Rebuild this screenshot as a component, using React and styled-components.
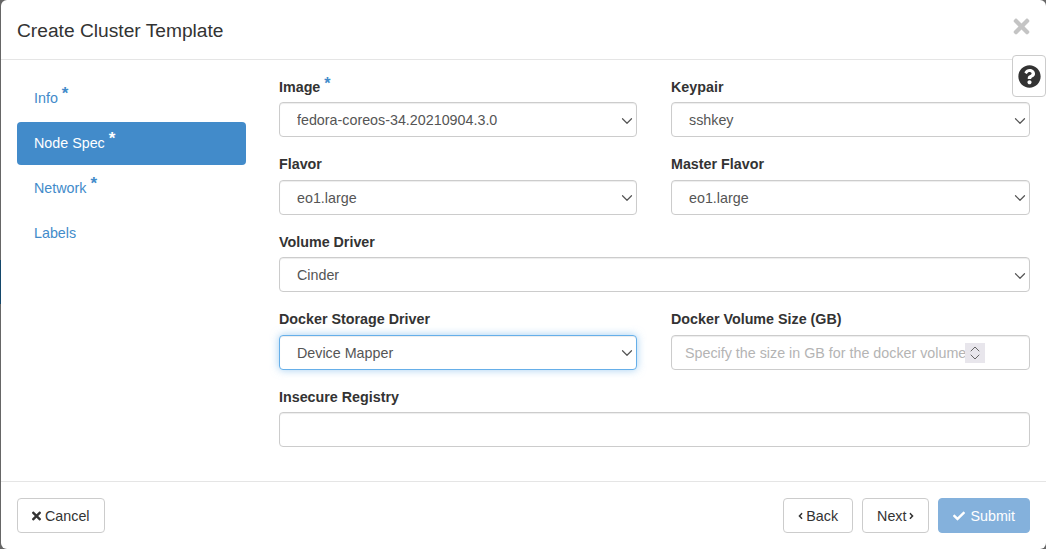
import styled, { createGlobalStyle } from 'styled-components';
import { ChevronDown, ChevronUp } from 'lucide-react';
import { FaAngleLeft, FaAngleRight, FaCheck, FaQuestionCircle, FaTimes } from 'react-icons/fa';

const GlobalStyle = createGlobalStyle`
  html, body {
    margin: 0;
    height: 100%;
    overflow: hidden;
  }
  body {
    background: linear-gradient(
      #666 0 260px,
      #14486b 260px 304px,
      #666 304px
    );
    font-family: "Liberation Sans", Arial, sans-serif;
    font-size: 14.3px;
    color: #333;
  }
`;

const steps = [
  { name: 'Info', required: true },
  { name: 'Node Spec', required: true, active: true },
  { name: 'Network', required: true },
  { name: 'Labels' },
];

const App = () => (
  <>
    <GlobalStyle />
    <Modal>
      <Header>
        <Title>Create Cluster Template</Title>
        <CloseIcon>
          <FaTimes />
        </CloseIcon>
      </Header>
      <HelpButton>
        <FaQuestionCircle />
      </HelpButton>
      <Body>
        <Nav>
          {steps.map((step) => (
            <NavItem key={step.name} $active={step.active}>
              {step.name}
              {step.required && <Star>*</Star>}
            </NavItem>
          ))}
        </Nav>
        <Form>
          <Field>
            <Label>
              Image<LabelStar>*</LabelStar>
            </Label>
            <SelectBox value="fedora-coreos-34.20210904.3.0" />
          </Field>
          <Field>
            <Label>Keypair</Label>
            <SelectBox value="sshkey" />
          </Field>
          <Field>
            <Label>Flavor</Label>
            <SelectBox value="eo1.large" />
          </Field>
          <Field>
            <Label>Master Flavor</Label>
            <SelectBox value="eo1.large" />
          </Field>
          <Field $wide>
            <Label>Volume Driver</Label>
            <SelectBox value="Cinder" />
          </Field>
          <Field>
            <Label>Docker Storage Driver</Label>
            <SelectBox value="Device Mapper" focused />
          </Field>
          <Field>
            <Label>Docker Volume Size (GB)</Label>
            <InputWrap>
              <Input placeholder="Specify the size in GB for the docker volume" />
              <Spinner>
                <ChevronUp size={16} strokeWidth={1.5} />
                <ChevronDown size={16} strokeWidth={1.5} />
              </Spinner>
            </InputWrap>
          </Field>
          <Field $wide>
            <Label>Insecure Registry</Label>
            <Input />
          </Field>
        </Form>
      </Body>
      <Footer>
        <Button>
          <CancelIcon /> Cancel
        </Button>
        <FooterRight>
          <Button>
            <AngleLeft /> Back
          </Button>
          <Button>
            Next <AngleRight />
          </Button>
          <SubmitButton>
            <FaCheck size={12} /> Submit
          </SubmitButton>
        </FooterRight>
      </Footer>
    </Modal>
  </>
);

const SelectBox = ({ value, focused }) => (
  <SelectWrap>
    <Select $focused={focused} defaultValue={value}>
      <option>{value}</option>
    </Select>
    <SelectArrow>
      <ChevronDown size={18} strokeWidth={1.6} />
    </SelectArrow>
  </SelectWrap>
);

export default App;

const Modal = styled.div`
  position: relative;
  box-sizing: border-box;
  width: 1045px;
  height: 549px;
  margin-left: 1px;
  background: #fff;
  border-radius: 6px;
  display: flex;
  flex-direction: column;
`;

const Header = styled.div`
  height: 60px;
  box-sizing: border-box;
  border-bottom: 1px solid #e5e5e5;
  padding: 0 16px;
  display: flex;
  align-items: center;
  justify-content: space-between;
`;

const Title = styled.h4`
  margin: 2px 0 0;
  font-size: 19.2px;
  font-weight: 400;
  color: #333;
`;

const CloseIcon = styled.span`
  display: flex;
  margin: 0 -3px 6px 0;
  font-size: 23px;
  color: #c4c4c4;
`;

const HelpButton = styled.div`
  position: absolute;
  top: 55px;
  right: 0;
  width: 34px;
  height: 42px;
  box-sizing: border-box;
  background: #fff;
  border: 1px solid #ccc;
  border-radius: 4px;
  display: flex;
  align-items: center;
  justify-content: center;
  font-size: 23px;
  color: #333;
`;

const Body = styled.div`
  flex: 1;
  display: flex;
  padding: 17px 16px 0;
`;

const Nav = styled.div`
  width: 229px;
  display: flex;
  flex-direction: column;
  gap: 2px;
`;

const NavItem = styled.div`
  height: 43px;
  box-sizing: border-box;
  padding: 0 17px 2px;
  display: flex;
  align-items: center;
  border-radius: 4px;
  color: ${(props) => (props.$active ? '#fff' : '#428bca')};
  background: ${(props) => (props.$active ? '#428bca' : 'transparent')};
`;

const Star = styled.span`
  align-self: flex-start;
  margin: 8px 0 0 4px;
  font-size: 17px;
  font-weight: 700;
  line-height: 1;
`;

const Form = styled.div`
  flex: 1;
  margin-left: 33px;
  display: grid;
  grid-template-columns: 358px 359px;
  column-gap: 34px;
  row-gap: 17.5px;
  align-content: start;
`;

const Field = styled.div`
  grid-column: ${(props) => (props.$wide ? '1 / -1' : 'auto')};
  display: flex;
  flex-direction: column;
`;

const Label = styled.label`
  height: 20px;
  margin: -0.25px 0 5.25px;
  font-weight: 700;
  line-height: 20px;
  color: #333;
`;

const LabelStar = styled.span`
  margin-left: 4px;
  font-size: 16px;
  color: #428bca;
  vertical-align: 3px;
  line-height: 0;
`;

const SelectWrap = styled.div`
  position: relative;
  height: 35px;
`;

const Select = styled.select`
  width: 100%;
  height: 100%;
  box-sizing: border-box;
  appearance: none;
  padding: 1px 30px 0 17px;
  font: inherit;
  color: #555;
  background: #fff;
  border: 1px solid ${(props) => (props.$focused ? '#66afe9' : '#ccc')};
  border-radius: 4px;
  outline: none;
  box-shadow: ${(props) =>
    props.$focused
      ? 'inset 0 1px 1px rgba(0,0,0,.075), 0 0 8px rgba(102,175,233,.6)'
      : 'inset 0 1px 1px rgba(0,0,0,.075)'};
`;

const SelectArrow = styled.span`
  position: absolute;
  top: 9.5px;
  right: 1px;
  display: flex;
  color: #555;
  pointer-events: none;
`;

const InputWrap = styled.div`
  position: relative;
`;

const Input = styled.input`
  width: 100%;
  height: 35px;
  box-sizing: border-box;
  padding: 1px 13px 0;
  font: inherit;
  color: #555;
  background: #fff;
  border: 1px solid #ccc;
  border-radius: 4px;
  outline: none;
  box-shadow: inset 0 1px 1px rgba(0, 0, 0, 0.075);

  &::placeholder {
    color: #b4b4b4;
    opacity: 1;
  }
`;

const Spinner = styled.span`
  position: absolute;
  top: 8px;
  right: 45px;
  width: 20px;
  height: 20px;
  background: #e8e6ec;
  color: #666;
  display: flex;
  flex-direction: column;
  align-items: center;
  justify-content: center;

  svg {
    margin: -4px 0;
  }
`;

const Footer = styled.div`
  height: 68px;
  box-sizing: border-box;
  border-top: 1px solid #e5e5e5;
  padding: 16px 16px 0;
  display: flex;
  justify-content: space-between;
  align-items: flex-start;
`;

const FooterRight = styled.div`
  display: flex;
  gap: 9px;
`;

const Button = styled.button`
  height: 35px;
  box-sizing: border-box;
  padding: 0 14px;
  display: inline-flex;
  align-items: center;
  gap: 3px;
  font: inherit;
  color: #333;
  background: #fff;
  border: 1px solid #ccc;
  border-radius: 4px;
`;

const SubmitButton = styled(Button)`
  gap: 6px;
  color: #fff;
  background: #84b1dc;
  border-color: #84b1dc;
`;

const CancelIcon = styled(FaTimes)`
  width: 9px;
  height: 14px;
  margin-right: 1px;
`;

const AngleLeft = styled(FaAngleLeft)`
  width: 5px;
  height: 14px;
`;

const AngleRight = styled(FaAngleRight)`
  width: 5px;
  height: 14px;
  margin-left: -1px;
`;
